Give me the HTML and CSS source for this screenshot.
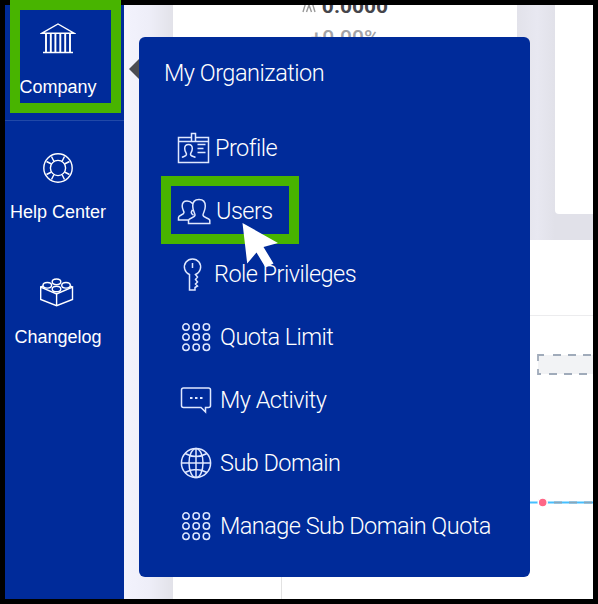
FILE: index.html
```
<!DOCTYPE html>
<html lang="en">
<head>
<meta charset="utf-8">
<title>My Organization</title>
<link rel="stylesheet" href="styles.css">
</head>
<body>
<div class="screen">
  <nav class="sidebar">
    <a class="nav-item company">
      <svg class="nav-icon" viewBox="0 0 36 36"><path d="M2 13.2 18 4l16 9.2zM3 32.500h30"/><path class="columns" d="M6 13.500v19M10.800 13.500v19M15.400 13.500v19M20.300 13.500v19M25.200 13.500v19M30 13.500v19"/></svg>
      <span>Company</span>
    </a>
    <a class="nav-item help">
      <svg class="nav-icon" viewBox="0 0 36 36"><circle cx="18" cy="18" r="14.2"/><circle cx="18" cy="18" r="7.6"/><path d="m14 11.500-2.500-5M11.500 14l-5-2.500M22 11.500l2.500-5M24.500 14l5-2.500M14 24.500l-2.500 5M11.500 22l-5 2.500M22 24.500l2.500 5M24.500 22l5 2.500"/></svg>
      <span>Help Center</span>
    </a>
    <a class="nav-item changelog">
      <svg class="nav-icon" viewBox="0 0 36 36"><path d="M.7 13v12.500l15.900 6.200 15.900-6.200V13l-15.900 7zM16.600 20v11.700M.7 13l4-1.500M32.500 13l-4-1.500"/><g class="studs"><ellipse cx="16.500" cy="7.800" rx="4.300" ry="2.800"/><ellipse cx="7.300" cy="11.300" rx="4.300" ry="2.800"/><ellipse cx="26" cy="11.300" rx="4.300" ry="2.800"/><ellipse cx="16.500" cy="15" rx="4.300" ry="2.800"/></g></svg>
      <span>Changelog</span>
    </a>
  </nav>
  <main class="content">
    <div class="cards">
      <section class="card stat">
        <div class="value"><svg class="mark" viewBox="0 0 14 14"><path d="M1 13 5.500-2M8.500-2 13 13M4.500 13 7 6l2.500 7"/></svg><b>0.0000</b></div>
        <div class="change">+0.00%</div>
      </section>
      <section class="card side"></section>
    </div>
    <section class="panel">
      <div class="panel-head"></div>
      <div class="panel-body">
        <div class="chart">
          <svg class="plot" viewBox="0 0 312 283"><path class="band" d="M257 39h60v19h-60z"/><path class="edge" d="M257 45v-6h6M257 53v5h3"/><path class="dash" d="M272 39h45M268 58h49"/><path class="line" d="M0 186.500h312"/><path class="over" d="M270 186.500h42"/><circle cx="261.700" cy="186.500" r="4.500"/></svg>
        </div>
      </div>
    </section>
  </main>
  <div class="arrow"></div>
  <div class="menu">
    <h1>My Organization</h1>
    <ul>
      <li class="profile"><svg viewBox="0 0 36 36"><path d="M15.500 7.500h-13v25h30v-25h-13M2.500 11.500h13M19.500 11.500h13M15.500 11.500v-8h4v8zM6 27.500c1.500-1.300 4.500-1 4.500-3.300 0-1.700-1.800-2.500-1.800-5.700 0-2.500 1.600-4 3.800-4s3.800 1.500 3.800 4c0 3.200-1.800 4-1.800 5.700 0 2.300 3.500 2 5 3.300M21.500 14.500h8M21.500 18.500h6M21.500 22.500h8"/></svg><span>Profile</span></li>
      <li class="users"><svg viewBox="0 0 36 36"><path d="M12.500 30.500v-3c0-2.500 6.500-2.500 6.500-5.500 0-2-2.300-4-2.300-9 0-4 2.500-6.500 6.300-6.500s6.300 2.500 6.300 6.500c0 5-2.300 7-2.300 9 0 3 6.800 3 6.800 5.500v3zM12.500 27h-10v-2.500C2.500 22 8 22 8 19.500 8 18 6.200 16.500 6.200 13c0-3 2-5 4.800-5 2.500 0 4.300 1 5.500 2.500M16.500 17c-.8 1.300-1.200 1.500-1.200 2.700 0 1 .8 1.600 2.200 2.300"/></svg><span>Users</span></li>
      <li class="roles"><svg viewBox="0 0 36 36"><path d="M13.500 18.500A8.100 8.100 0 1 1 19.500 18.500l2 2.500-2 2.500 2 2.500-2 2 2 2-2.500 1.500v2.500h-5.500zM16.500 7v5"/></svg><span>Role Privileges</span></li>
      <li class="wide"><svg viewBox="0 0 36 36"><path class="dots" d="M6.800 8a3.200 3.200 0 1 0 6.400 0a3.200 3.200 0 1 0-6.400 0zm10.200 0a3.200 3.200 0 1 0 6.400 0a3.200 3.200 0 1 0-6.400 0zm10.200 0a3.200 3.200 0 1 0 6.400 0a3.200 3.200 0 1 0-6.400 0zM6.800 18a3.200 3.200 0 1 0 6.400 0a3.200 3.200 0 1 0-6.400 0zm10.200 0a3.200 3.200 0 1 0 6.400 0a3.200 3.200 0 1 0-6.400 0zm10.200 0a3.200 3.200 0 1 0 6.400 0a3.200 3.200 0 1 0-6.400 0zM6.800 28.300a3.200 3.200 0 1 0 6.400 0a3.200 3.200 0 1 0-6.400 0zm10.200 0a3.200 3.200 0 1 0 6.400 0a3.200 3.200 0 1 0-6.400 0zm10.200 0a3.200 3.200 0 1 0 6.400 0a3.200 3.200 0 1 0-6.400 0z"/></svg><span>Quota Limit</span></li>
      <li class="wide activity"><svg viewBox="0 0 36 36"><path d="M7.500 6h25a2 2 0 0 1 2 2v15.500a2 2 0 0 1-2 2h-3V30L25 25.500H7.500a2 2 0 0 1-2-2V8a2 2 0 0 1 2-2z"/><path class="points" d="M14 16h2.500M19 16h2.500M24 16h2.500"/></svg><span>My Activity</span></li>
      <li class="wide domain"><svg viewBox="0 0 36 36"><circle cx="20" cy="18" r="14.600"/><ellipse cx="20" cy="18" rx="7" ry="14.600"/><path d="M20 3.400v29.200M5.400 18h29.200M9 8.500q11 6 22 0M9 27.500q11-6 22 0"/></svg><span>Sub Domain</span></li>
      <li class="wide manage"><svg viewBox="0 0 36 36"><path class="dots" d="M6.800 8a3.200 3.200 0 1 0 6.400 0a3.200 3.200 0 1 0-6.400 0zm10.200 0a3.200 3.200 0 1 0 6.400 0a3.200 3.200 0 1 0-6.400 0zm10.200 0a3.200 3.200 0 1 0 6.400 0a3.200 3.200 0 1 0-6.400 0zM6.800 18a3.200 3.200 0 1 0 6.400 0a3.200 3.200 0 1 0-6.400 0zm10.200 0a3.200 3.200 0 1 0 6.400 0a3.200 3.200 0 1 0-6.400 0zm10.200 0a3.200 3.200 0 1 0 6.400 0a3.200 3.200 0 1 0-6.400 0zM6.800 28.300a3.200 3.200 0 1 0 6.400 0a3.200 3.200 0 1 0-6.400 0zm10.200 0a3.200 3.200 0 1 0 6.400 0a3.200 3.200 0 1 0-6.400 0zm10.200 0a3.200 3.200 0 1 0 6.400 0a3.200 3.200 0 1 0-6.400 0z"/></svg><span>Manage Sub Domain Quota</span></li>
    </ul>
  </div>
</div>
<div class="highlight on-company"></div>
<div class="highlight on-users"></div>
<svg class="cursor" viewBox="0 0 38 46"><path d="M.5 1 36 21l-14.500 4L31.500 41.500 23.500 45.500 14.500 30.500 5.200 41.500z"/></svg>
</body>
</html>
```
FILE: styles.css
```
* { box-sizing: border-box; }
body {
  position: relative;
  width: 598px;
  height: 604px;
  margin: 0;
  overflow: hidden;
  font-family: Roboto, "Liberation Sans", sans-serif;
}
svg { display: block; fill: none; stroke: #fff; }
.screen {
  display: flex;
  width: 598px;
  height: 604px;
  border: 5px solid #000;
  background: #fff;
  overflow: hidden;
}

.sidebar {
  flex: none;
  width: 119px;
  background: #002b9a;
  color: #fff;
  font: 18px/22px "Liberation Sans", Arial, sans-serif;
}
.nav-item {
  display: flex;
  flex-direction: column;
  align-items: center;
  height: 125px;
  padding-right: 13px;
}
.nav-item span { white-space: nowrap; }
.nav-icon { width: 36px; height: 36px; stroke-width: 1.4; }
.columns { stroke-width: 1.9; }
.studs { fill: #002b9a; }
.company { height: 116px; padding-top: 15px; gap: 20px; border-bottom: 1px solid #2149a8; }
.help { padding-top: 29px; gap: 15px; }
.changelog { padding-top: 28px; gap: 16px; }

.content {
  display: flex;
  flex-direction: column;
  width: 469px;
  padding-left: 49px;
  background: linear-gradient(90deg, #f3f3fd 0, #eeeef8 25px, #e2e2e9 49px);
}
.cards {
  display: flex;
  gap: 38px;
  height: 235px;
  background: linear-gradient(90deg, #e2e2ea 344px, #e8e8f1 364px, #e1e1e9 382px);
}
.card { background: #fff; }
.stat {
  width: 344px;
  height: 235px;
  text-align: center;
}
.value {
  display: flex;
  justify-content: center;
  gap: 6px;
  height: 22px;
  margin-top: -10px;
  color: #45454b;
  font-size: 21px;
  line-height: 22px;
}
.mark { width: 14px; height: 14px; margin-top: 4px; stroke: #999; stroke-width: 1.4; overflow: visible; }
.change { margin-top: 10px; color: #a3a3a7; font-size: 21px; line-height: 22px; font-weight: 500; }
.side { width: 38px; height: 209px; border-bottom-left-radius: 4px; }
.panel { height: 359px; background: #fff; }
.panel-head { height: 76px; border-bottom: 1px solid #ececee; }
.panel-body { padding-left: 108px; }
.chart { height: 283px; border-left: 1px solid #e2e2e2; }
.plot { width: 312px; height: 283px; margin-left: -1px; }
.band { fill: #f2f3f5; stroke: none; }
.edge, .dash { stroke: #a0abba; stroke-width: 1.8; }
.dash { stroke-dasharray: 8 7; }
.line { stroke: #45bfff; stroke-width: 2; }
.over { stroke: #87a6bc; stroke-width: 2; stroke-dasharray: 8 7; stroke-dashoffset: -3; }
.plot circle { fill: #ff6787; stroke: #fff; stroke-width: 1.5; }

.arrow {
  position: absolute;
  left: 129px;
  top: 59px;
  border: 10px solid transparent;
  border-right-color: #4b4c52;
  border-left: 0;
}
.menu {
  position: absolute;
  left: 139px;
  top: 37px;
  width: 391px;
  height: 540px;
  padding: 21px 26px 0;
  border-radius: 6px;
  background: #002b9a;
  color: #fff;
}
h1 { margin: 0 0 0 -1px; font-size: 23.5px; line-height: 30px; font-weight: 300; letter-spacing: -.5px; }
.menu ul { margin: 28px 0 0; padding: 0; list-style: none; }
.menu li {
  display: flex;
  align-items: center;
  gap: 3px;
  height: 63px;
  margin-left: 11px;
  font-size: 23.5px;
  line-height: 30px;
  font-weight: 300;
  letter-spacing: -.53px;
  white-space: nowrap;
}
.menu li svg { flex: none; width: 36px; height: 36px; stroke: #dfe8ff; stroke-width: 1.5; }
.menu .wide { gap: 8px; }
.menu .users { gap: 4px; }
.menu .roles { gap: 2px; }
.menu .points { stroke-width: 2.2; }

.highlight { position: absolute; border: 10px solid #48b400; }
.on-company { left: 10px; top: 0; width: 111px; height: 113px; }
.on-users { left: 161px; top: 176px; width: 138px; height: 68px; }
.cursor { position: absolute; left: 242px; top: 222px; width: 38px; height: 46px; fill: #fff; stroke: none; }
```
